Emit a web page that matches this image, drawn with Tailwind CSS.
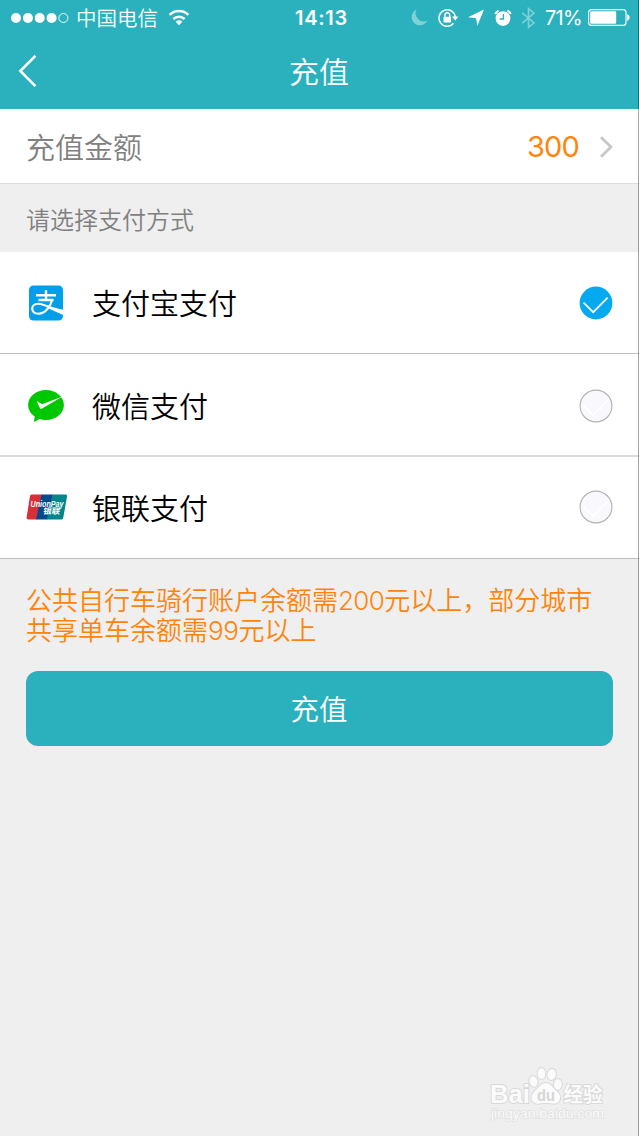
<!DOCTYPE html>
<html lang="zh-CN">
<head>
  <meta charset="UTF-8" />
  <meta name="viewport" content="width=device-width, initial-scale=1.0" />
  <title>充值</title>
  <script src="https://cdn.jsdelivr.net/npm/@tailwindcss/browser@4"></script>
</head>
<body class="bg-[#efefef] h-[1136px] overflow-hidden font-['Inter','Noto_Sans_CJK_SC',sans-serif] font-[350]">
  <div class="relative w-[639px] h-[1136px] overflow-hidden">

    <header class="bg-[#2ab1bd] text-white h-[109px]">
      <!-- Status bar -->
      <div class="grid grid-cols-[1fr_auto_1fr] items-center h-[35px] pl-[11px] pr-[9px]">
        <div class="flex items-center">
          <svg class="w-[58px] h-[12px]" viewBox="0 0 58 12" fill="#fff">
            <circle cx="5" cy="6" r="5" />
            <circle cx="16.9" cy="6" r="5" />
            <circle cx="28.7" cy="6" r="5" />
            <circle cx="40.6" cy="6" r="5" />
            <circle cx="52.4" cy="6" r="4.5" fill="none" stroke="#fff" stroke-width="0.9" />
          </svg>
          <span class="ml-[7px] pt-[3px] text-[20.5px] leading-none">中国电信</span>
          <svg class="ml-[10px] w-[22px] h-[17px]" viewBox="0 0 22 17" fill="none" stroke="#fff" stroke-width="2.6">
            <path d="M1.6 5.9A13.4 13.4 0 0 1 20.4 5.9" />
            <path d="M5.4 10A8 8 0 0 1 16.6 10" />
            <path d="M11 16.2L7.6 12.7A4.9 4.9 0 0 1 14.4 12.7Z" fill="#fff" stroke="none" />
          </svg>
        </div>
        <span class="pt-px pl-[2px] text-[20px] leading-none font-semibold tracking-[0.7px]">14:13</span>
        <div class="flex items-center justify-end">
          <svg class="w-[17px] h-[17px]" viewBox="0 0 17 17" fill="#7fd0d7">
            <path d="M5.6 0.6A8.2 8.2 0 1 0 16.4 11.4A8 8 0 0 1 5.6 0.6Z" />
          </svg>
          <svg class="ml-[10px] w-[21px] h-[20px]" viewBox="0 0 21 20" fill="none" stroke="#fff" stroke-width="1.4">
            <path d="M17.3 9A8.2 8.2 0 1 0 15.5 15.2" />
            <path d="M14 8.6H20.4L17.3 12.4Z" fill="#fff" stroke="none" />
            <rect x="5.5" y="8.8" width="7.6" height="5.8" rx="0.6" fill="#fff" stroke="none" />
            <path d="M6.9 9.2V7.2A2.4 2.4 0 0 1 11.7 7.2V9.2" />
          </svg>
          <svg class="ml-[9px] w-[17px] h-[17px]" viewBox="0 0 17 17" fill="#fff">
            <path d="M16 0.6L9.4 16.8L8.1 9.2L0 8.2Z" />
          </svg>
          <svg class="ml-[9px] w-[18px] h-[18px]" viewBox="0 0 18 18" fill="none">
            <circle cx="9" cy="9.6" r="7.4" fill="#fff" />
            <path d="M1.2 5A7 7 0 0 1 4.6 1.6M16.8 5A7 7 0 0 0 13.4 1.6" stroke="#fff" stroke-width="1.9" />
            <path d="M9.4 5V10H5.6" stroke="#2ab1bd" stroke-width="1.3" />
          </svg>
          <svg class="ml-[9px] w-[15px] h-[22px]" viewBox="0 0 15 22" fill="none" stroke="#7fd0d7" stroke-width="1.6">
            <path d="M1.2 5.8L13 15.8L7.5 20.4V1.6L13 6.2L1.2 16.2" />
          </svg>
          <span class="ml-[9px] w-[37px] text-[20px] leading-none tracking-[-0.7px] font-normal whitespace-nowrap">71%</span>
          <svg class="ml-[6px] w-[42px] h-[17px]" viewBox="0 0 42 17">
            <rect x="0.6" y="0.6" width="37.4" height="15.8" rx="3" fill="none" stroke="#fff" stroke-width="1.1" />
            <rect x="2.2" y="2.2" width="26" height="12.6" rx="1.4" fill="#fff" />
            <path d="M39.3 5.6A3.2 3.2 0 0 1 39.3 11.6Z" fill="#fff" stroke="#fff" stroke-width="0.6" />
          </svg>
        </div>
      </div>
      <!-- Nav bar -->
      <div class="grid grid-cols-[1fr_auto_1fr] items-center h-[73px] pl-[18px] pr-[19px]">
        <svg class="w-[19px] h-[32px] -mt-px" viewBox="0 0 19 32" fill="none" stroke="#fff" stroke-width="2.6">
          <path d="M17.4 0.9L2.3 16L17.4 31.1" />
        </svg>
        <h1 class="text-[30px] leading-none">充值</h1>
      </div>
    </header>

    <!-- Amount -->
    <div class="flex items-center h-[75px] bg-white border-b border-[#dcdcdc] pl-[26px] pr-[25px]">
      <span class="pt-[5px] text-[29px] leading-none text-[#808080]">充值金额</span>
      <span class="ml-auto text-[29px] leading-none text-[#ff840c] font-normal tracking-[-0.8px]">300</span>
      <svg class="ml-[20px] mt-px w-[15px] h-[22px]" viewBox="0 0 15 22" fill="none" stroke="#c7c7cc" stroke-width="2.8">
        <path d="M2 1.2L12 11L2 20.8" />
      </svg>
    </div>

    <div class="flex items-center h-[68px] pl-[26px] pt-[5px] text-[24px] leading-none text-[#808080]">请选择支付方式</div>

    <!-- Payment methods -->
    <div class="bg-white text-[29px] leading-none text-black">
      <div class="flex items-center h-[102px] border-b border-[#bfbfbf] pl-[26px] pr-[26px]">
        <svg class="w-[41px] h-[36px] mt-px" viewBox="0 0 41 36" fill="none">
          <rect x="3" y="0.5" width="34" height="35" rx="4.5" fill="#009fe8" />
          <path d="M20 5.2V14.5M10 10.2H30M12.5 15H27.5" stroke="#fff" stroke-width="2.4" />
          <path d="M26.4 14.4C24.6 21 19.5 28.7 12.6 28.7C8.6 28.7 6.2 26.6 6.2 23.6C6.2 20.7 8.7 18.7 12.2 18.7C17.5 18.7 24 22.6 37 27.2" stroke="#fff" stroke-width="2.1" />
          <path d="M22.5 21.2L37 24.8V30L21.5 22.9Z" fill="#fff" />
        </svg>
        <span class="ml-[25px] pt-[4px]">支付宝支付</span>
        <svg class="ml-auto w-[34px] h-[34px]" viewBox="0 0 34 34" fill="none">
          <circle cx="17" cy="17" r="16.4" fill="#04a9f0" />
          <path d="M4.6 16.6L14.2 26.2L28.6 11.6" stroke="#fff" stroke-width="1.7" />
        </svg>
      </div>
      <div class="flex items-center h-[103px] border-b-2 border-[#dadada] pt-px pl-[26px] pr-[26px]">
        <svg class="w-[41px] h-[34px] mt-[2px]" viewBox="0 0 41 34">
          <path d="M20 1C29.9 1 37.9 7.7 37.9 16S29.9 31 20 31C17.6 31 15.3 30.6 13.3 30L8.7 32.7C8 33 7.8 32.5 8 31.9L8.8 27.6C4.8 24.9 2.1 20.7 2.1 16C2.1 7.7 10.1 1 20 1Z" fill="#00c800" />
          <path d="M11.2 12.3L16 15.2L37 7.2L15.6 19.8C14.8 20.2 14.3 20 14 19.3L11 12.9Z" fill="#fff" />
        </svg>
        <span class="ml-[25px] pt-[5px]">微信支付</span>
        <svg class="ml-auto mt-px w-[34px] h-[34px]" viewBox="0 0 34 34" fill="none">
          <circle cx="17" cy="17" r="15.9" fill="#f8f8fd" stroke="#b2b2b2" stroke-width="1.1" />
          <path d="M4.6 16.6L14.2 26.2L28.6 11.6" stroke="#fff" stroke-width="1.7" />
        </svg>
      </div>
      <div class="flex items-center h-[102px] border-b border-[#bdbdbd] pl-[26px] pr-[26px]">
        <svg class="w-[42px] h-[26px] -mt-[2px]" viewBox="0 0 42 26">
          <path d="M5.5 0.5H16L10.5 25.5H2.2Q0.2 25.5 0.6 23.5L4 2Q4.3 0.5 5.5 0.5Z" fill="#d92f36" />
          <path d="M15.5 0.5H27L21.5 25.5H10Z" fill="#01498b" />
          <path d="M26.5 0.5H39.4Q41.4 0.5 41 2.5L37.2 24Q36.9 25.5 35.4 25.5H21Z" fill="#00858a" />
          <text x="4.5" y="13" textLength="33" lengthAdjust="spacingAndGlyphs" class="fill-white font-['Liberation_Sans',sans-serif] font-bold italic text-[8.5px]">UnionPay</text>
          <text x="20" y="20.2" textLength="17" lengthAdjust="spacingAndGlyphs" transform="skewX(-9)" class="fill-white font-['Noto_Sans_CJK_SC',sans-serif] font-bold text-[8px]">银联</text>
        </svg>
        <span class="ml-[24px] pt-[3px]">银联支付</span>
        <svg class="ml-auto -mt-px w-[34px] h-[34px]" viewBox="0 0 34 34" fill="none">
          <circle cx="17" cy="17" r="15.9" fill="#f8f8fd" stroke="#b2b2b2" stroke-width="1.1" />
          <path d="M4.6 16.6L14.2 26.2L28.6 11.6" stroke="#fff" stroke-width="1.7" />
        </svg>
      </div>
    </div>

    <p class="mt-[27px] ml-[26px] text-[26px] leading-[29.5px] text-[#ff840c] whitespace-nowrap">公共自行车骑行账户余额需<span class="tracking-[-0.6px]">200</span>元以上，部分城市<br />共享单车余额需<span class="tracking-[-0.4px]">99</span>元以上</p>

    <button class="block mt-[26px] ml-[26px] w-[587px] h-[75px] pt-[4px] pr-px rounded-[12px] bg-[#2ab1bd] text-white text-[28.5px] leading-none">充值</button>

    <!-- Watermark -->
    <svg class="absolute left-[486px] top-[1062px] w-[130px] h-[62px]" viewBox="0 0 130 62" fill="#fbfbfb" stroke="#d9d9d9" stroke-width="2" paint-order="stroke">
      <text x="4" y="41" textLength="40" lengthAdjust="spacingAndGlyphs" class="font-['Liberation_Sans',sans-serif] font-bold text-[26px]">Bai</text>
      <ellipse cx="47.5" cy="19.5" rx="3.9" ry="5.4" transform="rotate(-12 47.5 19.5)" />
      <ellipse cx="55.5" cy="11.5" rx="3.9" ry="5.5" />
      <ellipse cx="65.7" cy="12.5" rx="4.2" ry="5.5" transform="rotate(10 65.7 12.5)" />
      <ellipse cx="71.8" cy="22.5" rx="3.9" ry="5.4" transform="rotate(8 71.8 22.5)" />
      <path d="M59.5 21C64.5 21 66 25 70 28.5C74 32 75 35 73.5 38.5C71 43.5 65 41 59.5 41S49 43.5 46 38.5C44.5 35 46 31.5 50 28C53.5 25 55 21 59.5 21Z" />
      <text x="51" y="38.5" textLength="18" lengthAdjust="spacingAndGlyphs" stroke="none" class="fill-[#d6d6d6] font-['Liberation_Sans',sans-serif] font-bold text-[16px]">du</text>
      <text x="77.5" y="40" textLength="39" lengthAdjust="spacingAndGlyphs" class="font-['Noto_Sans_CJK_SC',sans-serif] font-bold text-[20px]">经验</text>
      <text x="5" y="56" textLength="113" lengthAdjust="spacingAndGlyphs" stroke="#e0e0e0" stroke-width="1.4" class="font-['Liberation_Sans',sans-serif] font-normal text-[13px]">jingyan.baidu.com</text>
    </svg>

    <!-- Right edge -->
    <div class="absolute right-0 top-0 w-px h-full bg-black/35"></div>
  </div>
</body>
</html>
